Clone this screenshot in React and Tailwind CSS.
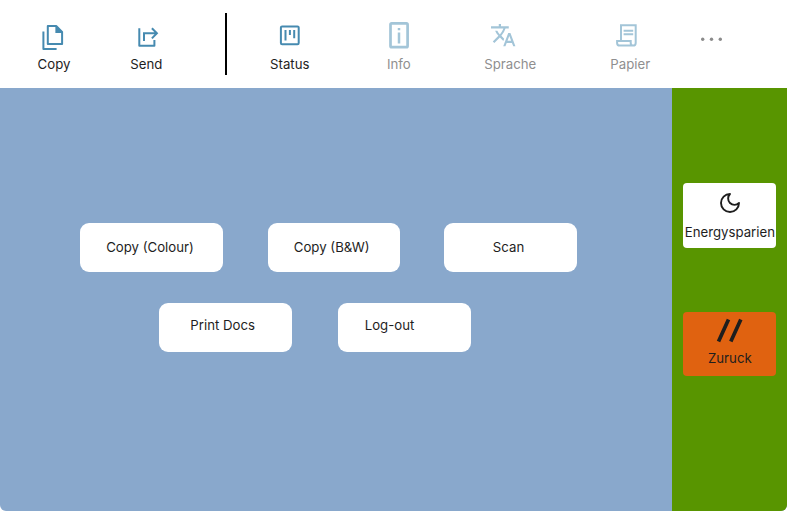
const stroke = { fill: "none", stroke: "currentColor", strokeWidth: 2 };

function CopyIcon() {
  return (
    <svg width="28" height="32" viewBox="0 0 28 32" {...stroke} strokeLinejoin="round">
      <path d="M7.8 7h8.4l5.9 6v12H7.8z" />
      <path d="M15.4 6.4v7.6h7.5z" fill="currentColor" stroke="none" />
      <path d="M3.4 12.5v17.5h13.2" />
    </svg>
  );
}

function SendIcon() {
  return (
    <svg width="28" height="32" viewBox="0 0 28 32" {...stroke}>
      <path d="M7.3 9.3V26.8H22.4V21" strokeLinejoin="round" />
      <path d="M12 22V14.3h12.4M19.9 9.2l5 5.1-5 5.1" />
    </svg>
  );
}

function StatusIcon() {
  return (
    <svg width="28" height="32" viewBox="0 0 28 32" {...stroke}>
      <rect x="4.9" y="7.4" width="17.8" height="17.8" rx="1.2" />
      <path d="M9.5 11v10.6M13.9 11v5M18.2 11v8.3" />
    </svg>
  );
}

function InfoIcon() {
  return (
    <svg width="28" height="32" viewBox="0 0 28 32" {...stroke}>
      <rect x="5.5" y="4.4" width="17.1" height="23.8" rx="1.2" strokeWidth="2.7" />
      <path d="M14 9v2.2M14 13.4v11" strokeWidth="2.5" />
    </svg>
  );
}

function TranslateIcon() {
  return (
    <svg width="28" height="32" viewBox="0 0 28 32" fill="currentColor">
      <path
        transform="translate(.9 2.9) scale(1.11)"
        d="M12.87 15.07l-2.54-2.51.03-.03A17.52 17.52 0 0014.07 6H17V4h-7V2H8v2H1v1.99h11.17C11.5 7.92 10.44 9.75 9 11.35 8.07 10.32 7.3 9.19 6.69 8h-2c.73 1.63 1.73 3.17 2.98 4.56l-5.09 5.02L4 19l5-5 3.11 3.11.76-2.04zM18.5 10h-2L12 22h2l1.12-3h4.75L21 22h2l-4.5-12zm-2.62 7l1.62-4.33L19.12 17h-3.24z"
      />
    </svg>
  );
}

function PaperIcon() {
  return (
    <svg width="28" height="32" viewBox="0 0 28 32" {...stroke}>
      <path d="M9 21.5V6.3h14.7v17.6a2.6 2.6 0 0 1-2.6 2.6H7.7a2.6 2.6 0 0 1-2.6-2.6V21.9h13.6v2a2.6 2.6 0 0 0 2.4 2.6" />
      <path d="M11.6 11.7h9.6M11.6 15.2h9.6" />
    </svg>
  );
}

function NavItem({ icon, label, className }) {
  return (
    <button className={`flex shrink-0 flex-col items-center pt-[19px] ${className}`}>
      <span>{icon}</span>
      <span className="mt-[5px] whitespace-nowrap leading-4">{label}</span>
    </button>
  );
}

const active = "[&_svg]:text-[#468ab0]";
const muted = "text-[#8f8f8f] [&_svg]:text-[#a3c5d8]";
const tile = "h-[49px] rounded-[9px] bg-white";

export default function App() {
  return (
    <div className="h-[512px] w-[788px] overflow-hidden bg-white font-['Inter',sans-serif] text-[13.23px] text-[#1e1e1e]">
      <header className="flex h-[88.4px] [&_svg]:block">
        <NavItem icon={<CopyIcon />} label="Copy" className={`ml-[14px] w-20 ${active}`} />
        <NavItem icon={<SendIcon />} label="Send" className={`ml-[12.4px] w-20 ${active}`} />
        <div className="ml-[38.2px] mt-[13px] h-[62px] w-[2px] shrink-0 bg-black" />
        <NavItem icon={<StatusIcon />} label="Status" className={`ml-[23.2px] w-20 ${active}`} />
        <NavItem icon={<InfoIcon />} label="Info" className={`ml-[29.1px] w-20 ${muted}`} />
        <NavItem icon={<TranslateIcon />} label="Sprache" className={`ml-[31.4px] w-20 [&_svg]:-ml-[14px] ${muted}`} />
        <NavItem icon={<PaperIcon />} label="Papier" className={`ml-[40px] w-20 [&_svg]:-ml-[9px] ${muted}`} />
        <svg className="ml-[28.6px] mt-[34px]" width="26" height="10" viewBox="0 0 26 10" fill="#8b8b8b">
          <circle cx="3.7" cy="5.2" r="1.7" />
          <circle cx="12.5" cy="5.2" r="1.7" />
          <circle cx="21.3" cy="5.2" r="1.7" />
        </svg>
      </header>
      <div className="flex h-[422.4px] w-[787.3px] overflow-hidden rounded-b-[6px] bg-[#89a8cc]">
        <main className="w-[672.4px] shrink-0 pt-[134.8px]">
          <div className="flex pl-[79.6px]">
            <button className={`${tile} w-[143.8px] pr-[3px]`}>Copy (Colour)</button>
            <button className={`${tile} ml-[44.2px] w-[132.8px] pr-[4.5px]`}>Copy (B&amp;W)</button>
            <button className={`${tile} ml-[44px] w-[132.8px] pr-[4.5px]`}>Scan</button>
          </div>
          <div className="mt-[30.8px] flex pl-[159.2px]">
            <button className={`${tile} w-[133px] pb-[4px] pr-[6px]`}>Print Docs</button>
            <button className={`${tile} ml-[46px] w-[133px] pb-[4px] pl-[26.5px] text-left`}>Log-out</button>
          </div>
        </main>
        <aside className="flex flex-1 flex-col items-center bg-[#589500] pt-[95.1px]">
          <button className="flex h-[64.3px] w-[93px] flex-col items-center rounded-[4px] bg-white pt-[8px]">
            <svg width="24" height="24" viewBox="0 0 24 24" fill="none" stroke="currentColor" strokeWidth="1.9" strokeLinejoin="round">
              <path d="M12 3a6 6 0 0 0 9 9 9 9 0 1 1-9-9Z" />
            </svg>
            <span className="mt-[8.5px] whitespace-nowrap leading-4">Energysparien</span>
          </button>
          <button className="mt-[64px] flex h-[64.3px] w-[93px] flex-col items-center rounded-[4px] bg-[#e06210] pt-[6px]">
            <svg width="28" height="26" viewBox="0 0 28 26" fill="none" stroke="currentColor" strokeWidth="3.7">
              <path d="M2.5 23.4L12.5 1.4M14.8 23.4L24.8 1.4" />
            </svg>
            <span className="mt-[6px] leading-4">Zuruck</span>
          </button>
        </aside>
      </div>
    </div>
  );
}
